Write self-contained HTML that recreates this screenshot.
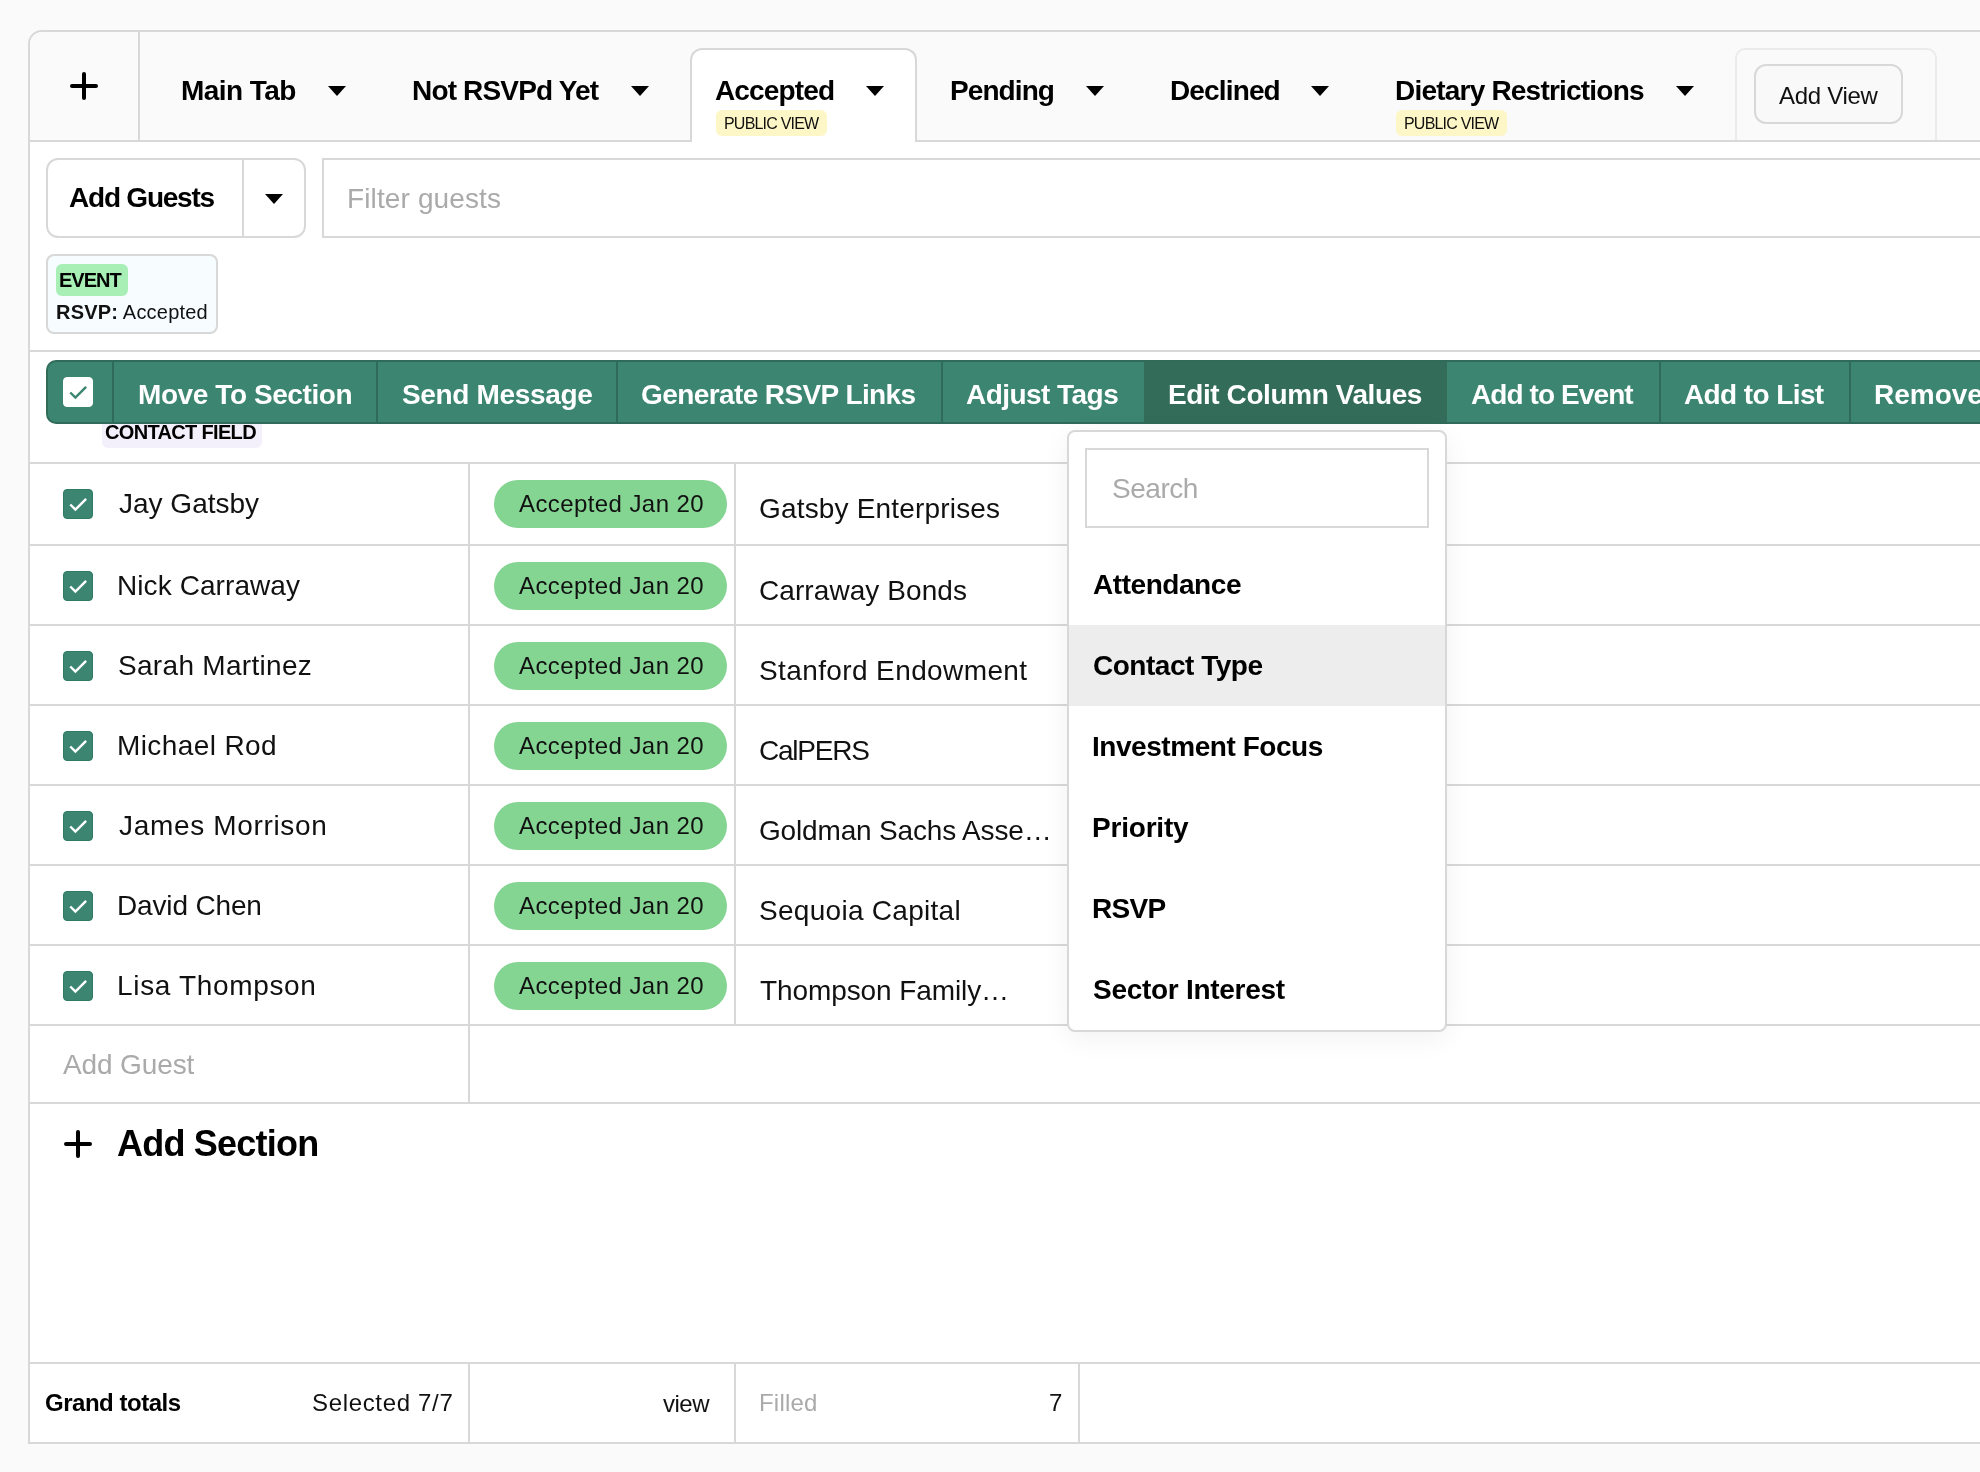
<!DOCTYPE html><html><head><meta charset="utf-8"><style>
html,body{margin:0;padding:0;}
body{width:1980px;height:1472px;overflow:hidden;background:#fafafa;position:relative;font-family:"Liberation Sans",sans-serif;}
.t{position:absolute;white-space:nowrap;will-change:transform;}
</style></head><body>
<div style="position:absolute;left:28px;top:30px;width:2100px;height:1410px;border:2px solid #d8d8d8;border-top-left-radius:14px;background:#fff;"></div>
<div style="position:absolute;left:30px;top:32px;width:2100px;height:108px;background:#fafafa;border-top-left-radius:12px;border-bottom:2px solid #d8d8d8;"></div>
<div style="position:absolute;left:138px;top:32px;width:2px;height:108px;background:#d8d8d8"></div>
<svg style="position:absolute;left:70px;top:72px" width="28" height="28" viewBox="0 0 28 28"><path d="M14.0 2.0V26.0M2.0 14.0H26.0" stroke="#000" stroke-width="4" stroke-linecap="round"/></svg>
<div style="position:absolute;left:690px;top:48px;width:223px;height:92px;border:2px solid #d8d8d8;border-bottom:none;border-radius:12px 12px 0 0;background:#fff;"></div>
<div class="t" id="t0" style="left:181.00px;top:73.50px;font-size:28px;line-height:34px;font-weight:700;color:#000;letter-spacing:-0.571px;">Main Tab</div>
<svg style="position:absolute;left:328px;top:86px" width="18" height="10" viewBox="0 0 18 10"><path d="M0 0H18L9.0 10Z" fill="#000"/></svg>
<div class="t" id="t1" style="left:412.00px;top:73.50px;font-size:28px;line-height:34px;font-weight:700;color:#000;letter-spacing:-0.833px;">Not RSVPd Yet</div>
<svg style="position:absolute;left:631px;top:86px" width="18" height="10" viewBox="0 0 18 10"><path d="M0 0H18L9.0 10Z" fill="#000"/></svg>
<div class="t" id="t2" style="left:715.00px;top:73.50px;font-size:28px;line-height:34px;font-weight:700;color:#000;letter-spacing:-0.857px;">Accepted</div>
<svg style="position:absolute;left:866px;top:86px" width="18" height="10" viewBox="0 0 18 10"><path d="M0 0H18L9.0 10Z" fill="#000"/></svg>
<div class="t" id="t3" style="left:950.00px;top:73.50px;font-size:28px;line-height:34px;font-weight:700;color:#000;letter-spacing:-0.917px;">Pending</div>
<svg style="position:absolute;left:1086px;top:86px" width="18" height="10" viewBox="0 0 18 10"><path d="M0 0H18L9.0 10Z" fill="#000"/></svg>
<div class="t" id="t4" style="left:1170.00px;top:73.50px;font-size:28px;line-height:34px;font-weight:700;color:#000;letter-spacing:-0.857px;">Declined</div>
<svg style="position:absolute;left:1311px;top:86px" width="18" height="10" viewBox="0 0 18 10"><path d="M0 0H18L9.0 10Z" fill="#000"/></svg>
<div class="t" id="t5" style="left:1395.00px;top:73.50px;font-size:28px;line-height:34px;font-weight:700;color:#000;letter-spacing:-0.789px;">Dietary Restrictions</div>
<svg style="position:absolute;left:1676px;top:86px" width="18" height="10" viewBox="0 0 18 10"><path d="M0 0H18L9.0 10Z" fill="#000"/></svg>
<div style="position:absolute;left:716px;top:110px;width:111px;height:26px;background:#fdf6c6;border-radius:6px"></div>
<div class="t" id="t6" style="left:724.00px;top:114.00px;font-size:16px;line-height:19px;font-weight:400;color:#111;letter-spacing:-0.800px;">PUBLIC VIEW</div>
<div style="position:absolute;left:1396px;top:110px;width:111px;height:26px;background:#fdf6c6;border-radius:6px"></div>
<div class="t" id="t7" style="left:1404.00px;top:114.00px;font-size:16px;line-height:19px;font-weight:400;color:#111;letter-spacing:-0.800px;">PUBLIC VIEW</div>
<div style="position:absolute;left:1735px;top:48px;width:198px;height:90px;border:2px solid #ebebeb;border-bottom:none;border-radius:10px 10px 0 0;background:#fafafa;"></div>
<div style="position:absolute;left:1754px;top:64px;width:145px;height:56px;border:2px solid #d8d8d8;border-radius:12px;background:#f9f9f9;"></div>
<div class="t" id="t8" style="left:1779.00px;top:81.00px;font-size:24px;line-height:29px;font-weight:400;color:#111;letter-spacing:-0.286px;">Add View</div>
<div style="position:absolute;left:46px;top:158px;width:256px;height:76px;border:2px solid #d8d8d8;border-radius:12px;background:#fff;"></div>
<div style="position:absolute;left:242px;top:160px;width:2px;height:76px;background:#d8d8d8"></div>
<div class="t" id="t9" style="left:69.00px;top:180.50px;font-size:28px;line-height:34px;font-weight:700;color:#000;letter-spacing:-1.222px;">Add Guests</div>
<svg style="position:absolute;left:265px;top:194px" width="18" height="10" viewBox="0 0 18 10"><path d="M0 0H18L9.0 10Z" fill="#000"/></svg>
<div style="position:absolute;left:322px;top:158px;width:1800px;height:76px;border:2px solid #d8d8d8;background:#fff;"></div>
<div class="t" id="t10" style="left:347.00px;top:181.50px;font-size:28px;line-height:34px;font-weight:400;color:#aaaaaa;letter-spacing:0.125px;">Filter guests</div>
<div style="position:absolute;left:46px;top:254px;width:168px;height:76px;border:2px solid #d8d8d8;border-radius:8px;background:#f6fcff;"></div>
<div style="position:absolute;left:56px;top:264px;width:72px;height:32px;background:#a8efb6;border-radius:6px"></div>
<div class="t" id="t11" style="left:59.19px;top:268.00px;font-size:20px;line-height:24px;font-weight:700;color:#000;letter-spacing:-1.000px;">EVENT</div>
<div class="t" id="t12" style="left:55.60px;top:300.00px;font-size:20px;line-height:24px;font-weight:400;color:#111;letter-spacing:0.208px;"><b>RSVP:</b> Accepted</div>
<div style="position:absolute;left:30px;top:350px;width:1950px;height:2px;background:#d8d8d8"></div>
<div style="position:absolute;left:102px;top:412px;width:160px;height:36px;background:#f3f0fb;border-radius:6px"></div>
<div class="t" id="t13" style="left:105.19px;top:420.00px;font-size:20px;line-height:24px;font-weight:700;color:#000;letter-spacing:-0.667px;">CONTACT FIELD</div>
<div style="position:absolute;left:46px;top:360px;width:2100px;height:60px;border:2px solid #2f6b58;border-right:none;border-radius:10px 0 0 10px;background:#3b8571;"></div>
<div style="position:absolute;left:1144px;top:362px;width:303px;height:60px;background:#336d5a"></div>
<div style="position:absolute;left:112px;top:362px;width:2px;height:60px;background:#2f6b58"></div>
<div style="position:absolute;left:376px;top:362px;width:2px;height:60px;background:#2f6b58"></div>
<div style="position:absolute;left:616px;top:362px;width:2px;height:60px;background:#2f6b58"></div>
<div style="position:absolute;left:941px;top:362px;width:2px;height:60px;background:#2f6b58"></div>
<div style="position:absolute;left:1659px;top:362px;width:2px;height:60px;background:#2f6b58"></div>
<div style="position:absolute;left:1849px;top:362px;width:2px;height:60px;background:#2f6b58"></div>
<svg style="position:absolute;left:63px;top:377px" width="30" height="30" viewBox="0 0 30 30"><rect x="0.5" y="0.5" width="29" height="29" rx="3.5" fill="#fff" stroke="#fff" stroke-width="1"/><path d="M7.3 15.5L12.4 20.6L23.1 9.9" fill="none" stroke="#3b8571" stroke-width="2.45"/></svg>
<div class="t" id="t14" style="left:137.60px;top:377.50px;font-size:28px;line-height:34px;font-weight:700;color:#fff;letter-spacing:-0.414px;">Move To Section</div>
<div class="t" id="t15" style="left:401.79px;top:377.50px;font-size:28px;line-height:34px;font-weight:700;color:#fff;letter-spacing:-0.327px;">Send Message</div>
<div class="t" id="t16" style="left:641.39px;top:377.50px;font-size:28px;line-height:34px;font-weight:700;color:#fff;letter-spacing:-0.594px;">Generate RSVP Links</div>
<div class="t" id="t17" style="left:966.19px;top:377.50px;font-size:28px;line-height:34px;font-weight:700;color:#fff;letter-spacing:-0.540px;">Adjust Tags</div>
<div class="t" id="t18" style="left:1168.00px;top:377.50px;font-size:28px;line-height:34px;font-weight:700;color:#fff;letter-spacing:-0.412px;">Edit Column Values</div>
<div class="t" id="t19" style="left:1471.39px;top:377.50px;font-size:28px;line-height:34px;font-weight:700;color:#fff;letter-spacing:-0.909px;">Add to Event</div>
<div class="t" id="t20" style="left:1684.00px;top:377.50px;font-size:28px;line-height:34px;font-weight:700;color:#fff;letter-spacing:-0.600px;">Add to List</div>
<div class="t" id="t21" style="left:1874.00px;top:377.50px;font-size:28px;line-height:34px;font-weight:700;color:#fff;letter-spacing:0.000px;">Remove</div>
<div style="position:absolute;left:30px;top:462px;width:1950px;height:2px;background:#d8d8d8"></div>
<svg style="position:absolute;left:63px;top:489px" width="30" height="30" viewBox="0 0 30 30"><rect x="0.5" y="0.5" width="29" height="29" rx="3.5" fill="#3b8571" stroke="#2f7a63" stroke-width="1"/><path d="M7.3 15.5L12.4 20.6L23.1 9.9" fill="none" stroke="#fff" stroke-width="2.45"/></svg>
<div class="t" id="t22" style="left:119.00px;top:486.50px;font-size:28px;line-height:34px;font-weight:400;color:#111;letter-spacing:0.000px;">Jay Gatsby</div>
<div style="position:absolute;left:494px;top:480px;width:233px;height:48px;background:#84d492;border-radius:24px"></div>
<div class="t" id="t23" style="left:518.60px;top:489.00px;font-size:24px;line-height:29px;font-weight:400;color:#111;letter-spacing:0.414px;">Accepted Jan 20</div>
<div class="t" id="t24" style="left:759.39px;top:491.50px;font-size:28px;line-height:34px;font-weight:400;color:#111;letter-spacing:0.176px;">Gatsby Enterprises</div>
<div style="position:absolute;left:30px;top:544px;width:1950px;height:2px;background:#d8d8d8"></div>
<svg style="position:absolute;left:63px;top:571px" width="30" height="30" viewBox="0 0 30 30"><rect x="0.5" y="0.5" width="29" height="29" rx="3.5" fill="#3b8571" stroke="#2f7a63" stroke-width="1"/><path d="M7.3 15.5L12.4 20.6L23.1 9.9" fill="none" stroke="#fff" stroke-width="2.45"/></svg>
<div class="t" id="t25" style="left:117.00px;top:568.50px;font-size:28px;line-height:34px;font-weight:400;color:#111;letter-spacing:0.083px;">Nick Carraway</div>
<div style="position:absolute;left:494px;top:562px;width:233px;height:48px;background:#84d492;border-radius:24px"></div>
<div class="t" id="t26" style="left:518.60px;top:571.00px;font-size:24px;line-height:29px;font-weight:400;color:#111;letter-spacing:0.414px;">Accepted Jan 20</div>
<div class="t" id="t27" style="left:759.39px;top:573.50px;font-size:28px;line-height:34px;font-weight:400;color:#111;letter-spacing:0.077px;">Carraway Bonds</div>
<div style="position:absolute;left:30px;top:624px;width:1950px;height:2px;background:#d8d8d8"></div>
<svg style="position:absolute;left:63px;top:651px" width="30" height="30" viewBox="0 0 30 30"><rect x="0.5" y="0.5" width="29" height="29" rx="3.5" fill="#3b8571" stroke="#2f7a63" stroke-width="1"/><path d="M7.3 15.5L12.4 20.6L23.1 9.9" fill="none" stroke="#fff" stroke-width="2.45"/></svg>
<div class="t" id="t28" style="left:118.00px;top:648.50px;font-size:28px;line-height:34px;font-weight:400;color:#111;letter-spacing:0.308px;">Sarah Martinez</div>
<div style="position:absolute;left:494px;top:642px;width:233px;height:48px;background:#84d492;border-radius:24px"></div>
<div class="t" id="t29" style="left:518.60px;top:651.00px;font-size:24px;line-height:29px;font-weight:400;color:#111;letter-spacing:0.414px;">Accepted Jan 20</div>
<div class="t" id="t30" style="left:759.39px;top:653.50px;font-size:28px;line-height:34px;font-weight:400;color:#111;letter-spacing:0.388px;">Stanford Endowment</div>
<div style="position:absolute;left:30px;top:704px;width:1950px;height:2px;background:#d8d8d8"></div>
<svg style="position:absolute;left:63px;top:731px" width="30" height="30" viewBox="0 0 30 30"><rect x="0.5" y="0.5" width="29" height="29" rx="3.5" fill="#3b8571" stroke="#2f7a63" stroke-width="1"/><path d="M7.3 15.5L12.4 20.6L23.1 9.9" fill="none" stroke="#fff" stroke-width="2.45"/></svg>
<div class="t" id="t31" style="left:117.00px;top:728.50px;font-size:28px;line-height:34px;font-weight:400;color:#111;letter-spacing:0.400px;">Michael Rod</div>
<div style="position:absolute;left:494px;top:722px;width:233px;height:48px;background:#84d492;border-radius:24px"></div>
<div class="t" id="t32" style="left:518.60px;top:731.00px;font-size:24px;line-height:29px;font-weight:400;color:#111;letter-spacing:0.414px;">Accepted Jan 20</div>
<div class="t" id="t33" style="left:759.39px;top:733.50px;font-size:28px;line-height:34px;font-weight:400;color:#111;letter-spacing:-1.233px;">CalPERS</div>
<div style="position:absolute;left:30px;top:784px;width:1950px;height:2px;background:#d8d8d8"></div>
<svg style="position:absolute;left:63px;top:811px" width="30" height="30" viewBox="0 0 30 30"><rect x="0.5" y="0.5" width="29" height="29" rx="3.5" fill="#3b8571" stroke="#2f7a63" stroke-width="1"/><path d="M7.3 15.5L12.4 20.6L23.1 9.9" fill="none" stroke="#fff" stroke-width="2.45"/></svg>
<div class="t" id="t34" style="left:119.00px;top:808.50px;font-size:28px;line-height:34px;font-weight:400;color:#111;letter-spacing:0.669px;">James Morrison</div>
<div style="position:absolute;left:494px;top:802px;width:233px;height:48px;background:#84d492;border-radius:24px"></div>
<div class="t" id="t35" style="left:518.60px;top:811.00px;font-size:24px;line-height:29px;font-weight:400;color:#111;letter-spacing:0.414px;">Accepted Jan 20</div>
<div class="t" id="t36" style="left:759.39px;top:813.50px;font-size:28px;line-height:34px;font-weight:400;color:#111;letter-spacing:-0.167px;">Goldman Sachs Asse…</div>
<div style="position:absolute;left:30px;top:864px;width:1950px;height:2px;background:#d8d8d8"></div>
<svg style="position:absolute;left:63px;top:891px" width="30" height="30" viewBox="0 0 30 30"><rect x="0.5" y="0.5" width="29" height="29" rx="3.5" fill="#3b8571" stroke="#2f7a63" stroke-width="1"/><path d="M7.3 15.5L12.4 20.6L23.1 9.9" fill="none" stroke="#fff" stroke-width="2.45"/></svg>
<div class="t" id="t37" style="left:117.00px;top:888.50px;font-size:28px;line-height:34px;font-weight:400;color:#111;letter-spacing:-0.156px;">David Chen</div>
<div style="position:absolute;left:494px;top:882px;width:233px;height:48px;background:#84d492;border-radius:24px"></div>
<div class="t" id="t38" style="left:518.60px;top:891.00px;font-size:24px;line-height:29px;font-weight:400;color:#111;letter-spacing:0.414px;">Accepted Jan 20</div>
<div class="t" id="t39" style="left:759.39px;top:893.50px;font-size:28px;line-height:34px;font-weight:400;color:#111;letter-spacing:0.286px;">Sequoia Capital</div>
<div style="position:absolute;left:30px;top:944px;width:1950px;height:2px;background:#d8d8d8"></div>
<svg style="position:absolute;left:63px;top:971px" width="30" height="30" viewBox="0 0 30 30"><rect x="0.5" y="0.5" width="29" height="29" rx="3.5" fill="#3b8571" stroke="#2f7a63" stroke-width="1"/><path d="M7.3 15.5L12.4 20.6L23.1 9.9" fill="none" stroke="#fff" stroke-width="2.45"/></svg>
<div class="t" id="t40" style="left:117.00px;top:968.50px;font-size:28px;line-height:34px;font-weight:400;color:#111;letter-spacing:0.667px;">Lisa Thompson</div>
<div style="position:absolute;left:494px;top:962px;width:233px;height:48px;background:#84d492;border-radius:24px"></div>
<div class="t" id="t41" style="left:518.60px;top:971.00px;font-size:24px;line-height:29px;font-weight:400;color:#111;letter-spacing:0.414px;">Accepted Jan 20</div>
<div class="t" id="t42" style="left:760.39px;top:973.50px;font-size:28px;line-height:34px;font-weight:400;color:#111;letter-spacing:-0.093px;">Thompson Family…</div>
<div style="position:absolute;left:30px;top:1024px;width:1950px;height:2px;background:#d8d8d8"></div>
<div style="position:absolute;left:468px;top:464px;width:2px;height:640px;background:#d8d8d8"></div>
<div style="position:absolute;left:734px;top:464px;width:2px;height:560px;background:#d8d8d8"></div>
<div style="position:absolute;left:30px;top:1102px;width:1950px;height:2px;background:#d8d8d8"></div>
<div class="t" id="t43" style="left:62.60px;top:1047.50px;font-size:28px;line-height:34px;font-weight:400;color:#aaaaaa;letter-spacing:-0.125px;">Add Guest</div>
<svg style="position:absolute;left:64px;top:1130px" width="28" height="28" viewBox="0 0 28 28"><path d="M14.0 2.0V26.0M2.0 14.0H26.0" stroke="#000" stroke-width="4" stroke-linecap="round"/></svg>
<div class="t" id="t44" style="left:117.00px;top:1122.00px;font-size:36px;line-height:43px;font-weight:700;color:#000;letter-spacing:-0.780px;">Add Section</div>
<div style="position:absolute;left:30px;top:1362px;width:1950px;height:2px;background:#d8d8d8"></div>
<div style="position:absolute;left:468px;top:1364px;width:2px;height:78px;background:#d8d8d8"></div>
<div style="position:absolute;left:734px;top:1364px;width:2px;height:78px;background:#d8d8d8"></div>
<div style="position:absolute;left:1078px;top:1364px;width:2px;height:78px;background:#d8d8d8"></div>
<div class="t" id="t45" style="left:45.39px;top:1388.00px;font-size:24px;line-height:29px;font-weight:700;color:#000;letter-spacing:-0.473px;">Grand totals</div>
<div class="t" id="t46" style="left:311.70px;top:1388.00px;font-size:24px;line-height:29px;font-weight:400;color:#111;letter-spacing:0.664px;">Selected 7/7</div>
<div class="t" id="t47" style="left:662.50px;top:1389.00px;font-size:24px;line-height:29px;font-weight:400;color:#111;letter-spacing:-0.500px;">view</div>
<div class="t" id="t48" style="left:759.00px;top:1388.00px;font-size:24px;line-height:29px;font-weight:400;color:#aaaaaa;letter-spacing:0.200px;">Filled</div>
<div class="t" id="t49" style="left:1049.00px;top:1388.00px;font-size:24px;line-height:29px;font-weight:400;color:#111;letter-spacing:0.000px;">7</div>
<div style="position:absolute;left:1067px;top:430px;width:376px;height:598px;border:2px solid #d8d8d8;border-radius:8px;background:#fff;box-shadow:0 6px 28px rgba(0,0,0,0.06);overflow:hidden;"><div style="position:absolute;left:0;top:193px;width:376px;height:81px;background:#ededed"></div></div>
<div style="position:absolute;left:1085px;top:448px;width:340px;height:76px;border:2px solid #d8d8d8;background:#fff;"></div>
<div class="t" id="t50" style="left:1111.60px;top:471.50px;font-size:28px;line-height:34px;font-weight:400;color:#aaaaaa;letter-spacing:-0.460px;">Search</div>
<div class="t" id="t51" style="left:1093.00px;top:567.50px;font-size:28px;line-height:34px;font-weight:700;color:#000;letter-spacing:-0.444px;">Attendance</div>
<div class="t" id="t52" style="left:1093.00px;top:648.50px;font-size:28px;line-height:34px;font-weight:700;color:#000;letter-spacing:-0.482px;">Contact Type</div>
<div class="t" id="t53" style="left:1092.00px;top:729.50px;font-size:28px;line-height:34px;font-weight:700;color:#000;letter-spacing:-0.447px;">Investment Focus</div>
<div class="t" id="t54" style="left:1092.00px;top:810.50px;font-size:28px;line-height:34px;font-weight:700;color:#000;letter-spacing:-0.200px;">Priority</div>
<div class="t" id="t55" style="left:1092.00px;top:891.50px;font-size:28px;line-height:34px;font-weight:700;color:#000;letter-spacing:-0.667px;">RSVP</div>
<div class="t" id="t56" style="left:1093.00px;top:972.50px;font-size:28px;line-height:34px;font-weight:700;color:#000;letter-spacing:-0.286px;">Sector Interest</div>
</body></html>
